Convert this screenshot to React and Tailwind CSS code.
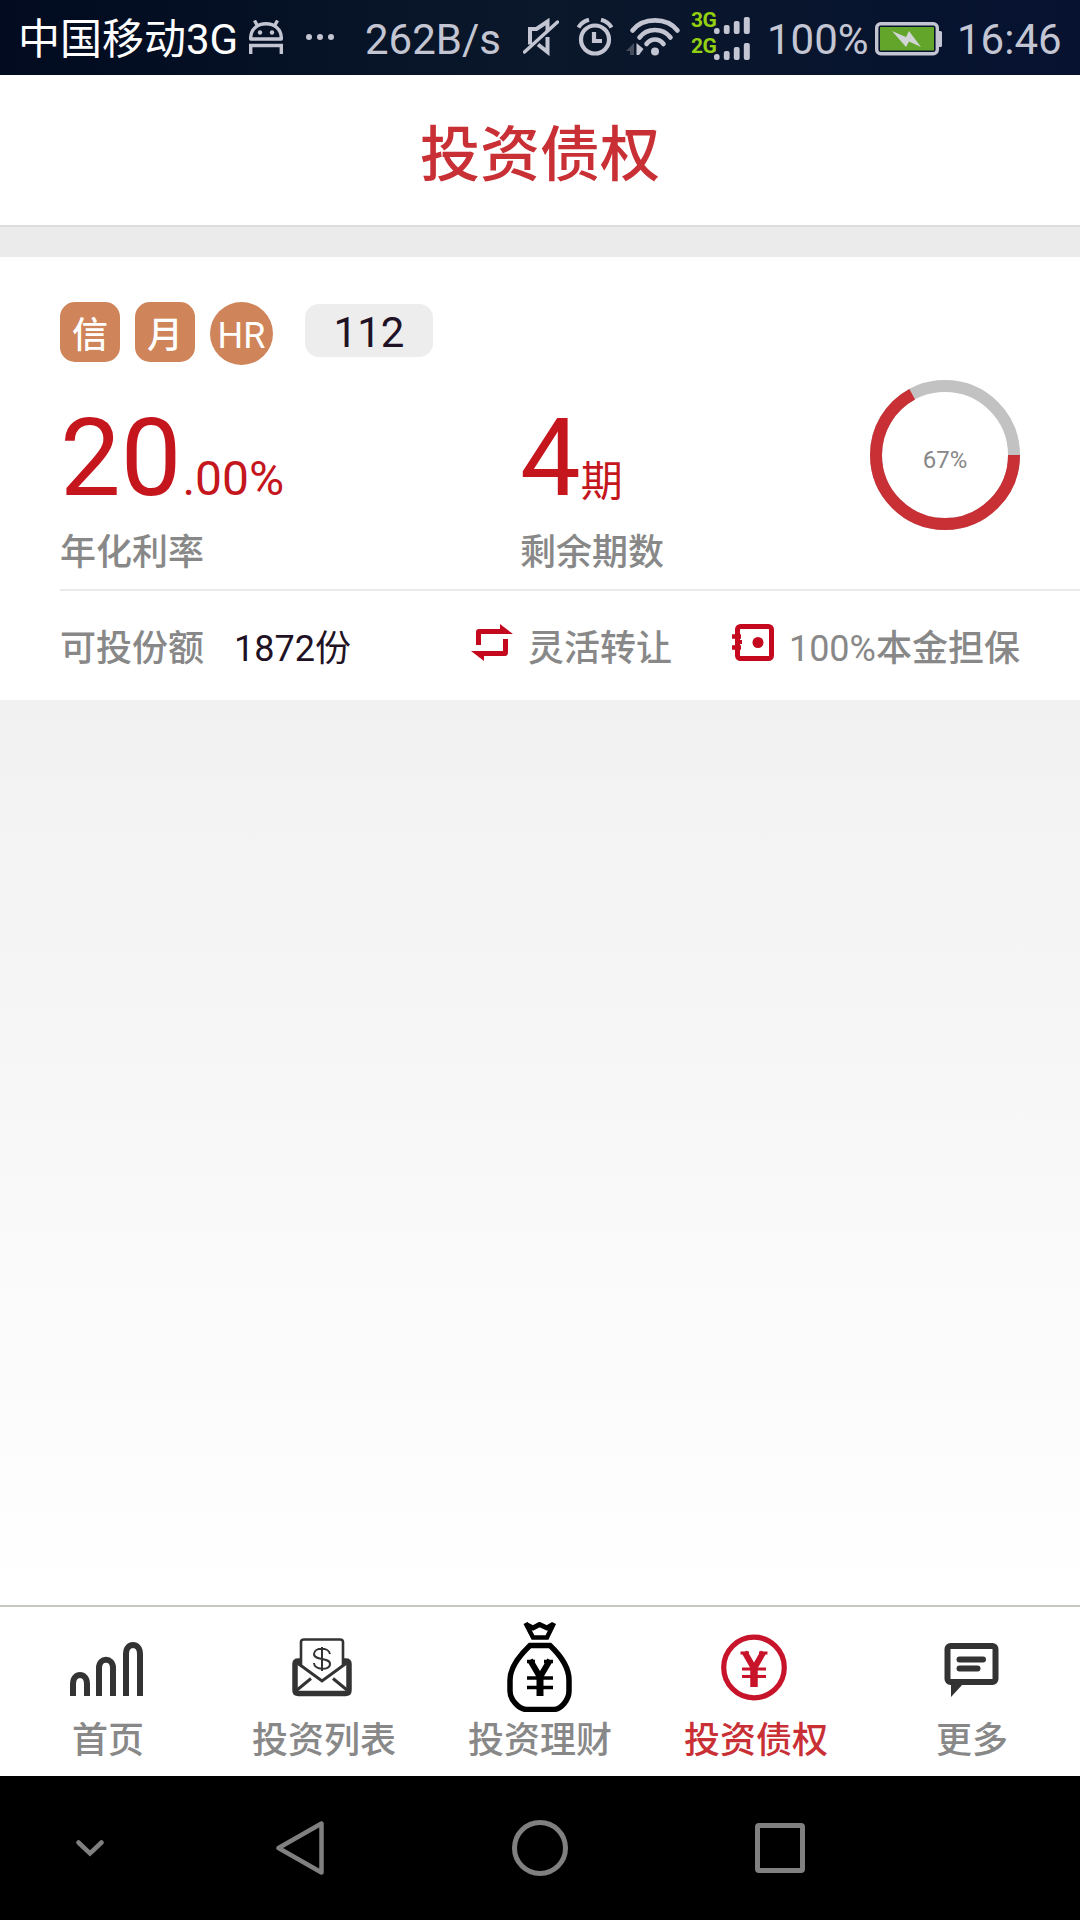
import React from "react";

function AndroidIcon() {
  return (
    <svg className="w-[34px] h-[34px]" viewBox="0 0 34 34" fill="none" stroke="#c3c6d2" strokeWidth="3.400">
      <path d="M1.700 19V17.500C2 9 8.500 3.800 17 3.800S32 9 32.300 17.500V19z" strokeLinejoin="round" />
      <path d="M8 5 5.500.5M26 5 28.500.5M1.700 34V25.500h30.600V34" strokeWidth="3.400" />
      <circle cx="11" cy="12.500" r="2.200" fill="#c3c6d2" stroke="none" />
      <circle cx="23" cy="12.500" r="2.200" fill="#c3c6d2" stroke="none" />
    </svg>
  );
}

function MuteIcon() {
  return (
    <svg className="w-[36px] h-[38px]" viewBox="0 0 36 38" fill="none" stroke="#c3c6d2" strokeWidth="4">
      <path d="M7 26.500V11H13.500L24.500 3.500V13M24.500 19V34L15 26.500" />
      <path d="M1.500 34 34.500 4" strokeLinecap="round" strokeWidth="3.400" />
    </svg>
  );
}

function AlarmIcon() {
  return (
    <svg className="w-[36px] h-[38px]" viewBox="0 0 36 38" fill="none" stroke="#c3c6d2" strokeWidth="4.200">
      <circle cx="18" cy="21.500" r="14" />
      <path d="M17 14V23H25" />
      <path d="M1.500 9.500Q5 3.500 12 1.800M34.500 9.500Q31 3.500 24 1.800" />
    </svg>
  );
}

function WifiIcon() {
  return (
    <svg className="w-[55px] h-[38px]" viewBox="0 0 55 38" fill="none" stroke="#c3c6d2" strokeWidth="4.600" strokeLinecap="round">
      <path d="M6.500 12.500C17-1 41-1 51.500 12.500M13.500 19.500C21 9.500 37 9.500 44.500 19.500M20.500 26C25 20 33 20 37.500 26" />
      <circle cx="29" cy="33.500" r="4" fill="#c3c6d2" stroke="none" />
      <path d="M0 33 8 25V37H4V33z" fill="#464d5e" stroke="none" />
      <path d="M10.500 25V37L13 37 17.500 31z" fill="#c3c6d2" stroke="none" />
    </svg>
  );
}

function SignalRow({ label }) {
  return (
    <div className="flex h-[26px]">
      <span className="-mt-px w-[23px] text-[21px] leading-[22px] font-bold text-[#93d011] tracking-[-0.5px]">{label}</span>
      <svg className="w-[36px] h-[26px]" viewBox="0 0 36 26" fill="#c3c6d2">
        <rect x="0" y="18" width="5.600" height="6" rx="2.500" />
        <rect x="9.800" y="15" width="5.800" height="9" rx="2" />
        <rect x="19.800" y="11" width="5.800" height="13" rx="2" />
        <rect x="29.800" y="7" width="6" height="17" rx="2" />
      </svg>
    </div>
  );
}

function BatteryIcon() {
  return (
    <svg className="w-[67px] h-[34px]" viewBox="0 0 67 34">
      <rect x="1.700" y="1.700" width="60.600" height="30" rx="4" fill="none" stroke="#c3c6d2" strokeWidth="3.400" />
      <path d="M63 9h2.500a1.500 1.500 0 0 1 1.500 1.500v13a1.500 1.500 0 0 1-1.500 1.500H63z" fill="#c3c6d2" />
      <rect x="5" y="5" width="54" height="23.500" fill="#62a52a" />
      <path d="M17 9 31 15 34 9 46 25 34 19.500 31 25z" fill="#d0d4d4" />
    </svg>
  );
}

function StatusBar() {
  return (
    <header className="flex h-[75px] items-start bg-linear-to-r from-[#020b20] via-[#0b172a] to-[#061230] text-[42px] leading-[48px] text-[#c3c6d2] whitespace-nowrap">
      <span className="ml-[18px] w-[231px] pt-4 text-white">中国移动3G</span>
      <div className="mt-5"><AndroidIcon /></div>
      <div className="ml-[23px] mt-[34px] flex gap-[5px]">
        <i className="size-[6px] rounded-full bg-[#c3c6d2]" />
        <i className="size-[6px] rounded-full bg-[#c3c6d2]" />
        <i className="size-[6px] rounded-full bg-[#c3c6d2]" />
      </div>
      <span className="ml-[31px] w-[158px] pt-4">262B/s</span>
      <div className="mt-[18px]"><MuteIcon /></div>
      <div className="ml-[18px] mt-[18px]"><AlarmIcon /></div>
      <div className="ml-[13px] mt-[18px]"><WifiIcon /></div>
      <div className="ml-[10px] mt-[10px]">
        <SignalRow label="3G" />
        <SignalRow label="2G" />
      </div>
      <span className="ml-[17px] w-[108px] pt-4">100%</span>
      <div className="mt-[22px]"><BatteryIcon /></div>
      <span className="ml-[15px] pt-4">16:46</span>
    </header>
  );
}

function Ring({ percent }) {
  const r = 69;
  const len = 2 * Math.PI * r;
  return (
    <div className="grid size-[150px] place-items-center">
      <svg className="col-start-1 row-start-1 size-[150px]" viewBox="0 0 150 150" fill="none" strokeWidth="12">
        <circle cx="75" cy="75" r={r} stroke="#c2c2c2" />
        <circle cx="75" cy="75" r={r} stroke="#c93036" strokeDasharray={`${(len * percent) / 100} ${len}`} />
      </svg>
      <span className="col-start-1 row-start-1 pt-[10px] text-[24px] leading-7 text-[#888]">{percent}%</span>
    </div>
  );
}

function TransferIcon() {
  return (
    <svg className="w-[42px] h-[37px]" viewBox="0 0 42 37" fill="#c4081e">
      <path d="M5 21V8q0-3 3-3H29V0L42 10H10V21z" />
      <path d="M37 15V28q0 4-3 4H13V37L0 27H32V15z" />
    </svg>
  );
}

function SafeIcon() {
  return (
    <svg className="w-[42px] h-[37px]" viewBox="0 0 42 37" fill="none" stroke="#c4081e">
      <rect x="5.500" y="2.500" width="34" height="32" rx="3" strokeWidth="5" />
      <path d="M0 12.500H9M0 23.500H9" strokeWidth="4.500" />
      <path d="M3 18H10" strokeWidth="4" />
      <circle cx="26" cy="18.500" r="5.500" fill="#c4081e" stroke="none" />
    </svg>
  );
}

function DebtCard() {
  return (
    <section className="h-[443px] bg-white pl-[60px]">
      <div className="flex items-start pt-[45px] text-[36px] leading-[60px] text-white">
        <span className="size-[60px] rounded-[15px] bg-[#cf8459] pt-1 text-center font-medium">信</span>
        <span className="ml-[15px] size-[60px] rounded-[15px] bg-[#cf8459] pt-1 text-center font-medium">月</span>
        <span className="ml-[15px] size-[63px] rounded-full bg-[#cf8459] pt-1 text-center">HR</span>
        <span className="ml-[32px] mt-[2px] h-[53px] w-[128px] rounded-[14px] bg-[#ededed] text-center text-[42px] leading-[58px] text-[#1f1225]">112</span>
      </div>

      <div className="flex h-[224px] pr-[60px]">
        <div className="w-[460px] pt-[33px]">
          <div className="h-[120px] leading-[120px] text-[#c5161d]">
            <span className="text-[108px]">20</span>
            <span className="ml-px text-[48px]">.00%</span>
          </div>
          <div className="mt-[14px] text-[36px] leading-[42px] font-medium text-[#888]">年化利率</div>
        </div>
        <div className="flex-1 pt-[33px]">
          <div className="flex h-[120px] leading-[120px] text-[#c5161d]">
            <span className="text-[108px]">4</span>
            <span className="pt-[24px] text-[42px]">期</span>
          </div>
          <div className="mt-[14px] text-[36px] leading-[42px] font-medium text-[#888]">剩余期数</div>
        </div>
        <div className="pt-[15px]">
          <Ring percent={67} />
        </div>
      </div>

      <div className="flex h-[111px] items-start border-t-2 border-[#ebebeb] pt-[37px] pr-[60px] text-[36px] leading-[42px] text-[#888] whitespace-nowrap">
        <span className="font-medium">可投份额</span>
        <span className="ml-[30px] w-[238px] text-[#1f1225]">1872份</span>
        <div className="-mt-[4px]"><TransferIcon /></div>
        <span className="ml-[15px] font-medium">灵活转让</span>
        <div className="-mt-[4px] ml-[60px]"><SafeIcon /></div>
        <span className="ml-[15px]">100%<span className="font-medium">本金担保</span></span>
      </div>
    </section>
  );
}

function HomeIcon() {
  return (
    <svg className="mr-1 w-[73px] h-[90px]" viewBox="0 0 73 90" fill="none" stroke="#333" strokeWidth="6">
      <path d="M3 74V62C3 50 17 50 17 62V74M29 74V46C29 35 43 35 43 46V74M56 74V32C56 20 70 20 70 32V74" />
    </svg>
  );
}

function ListIcon() {
  return (
    <svg className="mr-1 w-[60px] h-[90px]" viewBox="0 0 60 90" fill="none" stroke="#333">
      <path d="M9 39H6.500Q3 39 3 42V68Q3 71.500 6.500 71.500H53.500Q57 71.500 57 68V42Q57 39 53.500 39H51" strokeWidth="5.500" />
      <path d="M9 43V20Q9 17.500 12 17.500H48Q51 17.500 51 20V43" strokeWidth="2.600" />
      <path d="M4 40 30 59 56 40M5 68 19 56.500M55 68 41 56.500" strokeWidth="3" />
      <path d="M38 32C37 25 22 25 22 32C22 39 38 35 38 42C38 49 22 48 22 41M30 25V49" strokeWidth="2" />
    </svg>
  );
}

function BagIcon() {
  return (
    <svg className="w-[66px] h-[90px]" viewBox="0 0 66 90" fill="none" stroke="#000" strokeWidth="5.500">
      <path d="M23 23.500H43C52 32 62 45 62 58V69C62 78 54 87 47 87.500H19C12 87 3 78 3 69V58C3 45 14 32 23 23.500z" />
      <path d="M18.500 1 26 15.500H40L47 1" strokeWidth="4.500" />
      <path d="M19 2.500 26 6 32.500 2.500 40 6 46 2.500" strokeWidth="5" />
      <path d="M23 38 33 55 43 38" strokeWidth="6" />
      <path d="M33 52V74" strokeWidth="7" />
      <path d="M20 56H46M20 65.500H46M20 39.500H28M37 39.500H46" strokeWidth="3.500" />
    </svg>
  );
}

function YenIcon() {
  return (
    <svg className="mr-1 w-[66px] h-[90px]" viewBox="0 0 66 90" fill="none" stroke="#c8142a" strokeWidth="5.200">
      <circle cx="33" cy="45.500" r="30.300" />
      <path d="M23.500 30 33 46.500 42.500 30" strokeWidth="6" />
      <path d="M33 45V65" strokeWidth="7.500" />
      <path d="M21 47H45M21 54.500H45M19.500 31H28M38 31H46.500" strokeWidth="3" />
    </svg>
  );
}

function MoreIcon() {
  return (
    <svg className="mr-[2px] w-[55px] h-[90px]" viewBox="0 0 55 90" fill="none" stroke="#333" strokeLinecap="round">
      <rect x="3.500" y="24" width="48" height="36" rx="3" strokeWidth="6" />
      <path d="M15.500 37.500H39M15.500 46.500H33.500" strokeWidth="6" />
      <path d="M7 60V75L19 62z" fill="#333" stroke="none" />
    </svg>
  );
}

const tabs = [
  { label: "首页", Icon: HomeIcon },
  { label: "投资列表", Icon: ListIcon },
  { label: "投资理财", Icon: BagIcon },
  { label: "投资债权", Icon: YenIcon, active: true },
  { label: "更多", Icon: MoreIcon },
];

function TabBar() {
  return (
    <nav className="grid h-[171px] grid-cols-5 border-t-2 border-[#c6c7c0] bg-white">
      {tabs.map(({ label, Icon, active }) => (
        <div key={label} className="flex flex-col items-center pt-[15px]">
          <Icon />
          <span className={active ? "mt-2 text-[36px] leading-[42px] font-medium text-[#c93036]" : "mt-2 text-[36px] leading-[42px] font-medium text-[#888]"}>
            {label}
          </span>
        </div>
      ))}
    </nav>
  );
}

function SystemNav() {
  return (
    <footer className="grid h-[144px] grid-cols-[180px_240px_240px_240px_180px] place-items-center bg-black">
      <svg className="w-[28px] h-[18px]" viewBox="0 0 28 18" fill="none" stroke="#808080" strokeWidth="4.500">
        <path d="M2.500 3.500 14 14.500 25.500 3.500" strokeLinecap="round" />
      </svg>
      <svg className="w-[48px] h-[56px]" viewBox="0 0 48 56" fill="none" stroke="#808080" strokeWidth="4.500">
        <path d="M45.500 3.500V52.500L2.500 28z" strokeLinejoin="round" />
      </svg>
      <i className="size-[56px] rounded-full border-5 border-[#808080]" />
      <i className="size-[50px] rounded-[4px] border-5 border-[#808080]" />
    </footer>
  );
}

export default function App() {
  return (
    <div className="flex h-[1920px] w-[1080px] flex-col overflow-hidden bg-white font-[Roboto,'Noto_Sans_CJK_SC',sans-serif]">
      <StatusBar />
      <h1 className="h-[150px] pt-[46px] text-center text-[60px] leading-[70px] font-medium text-[#c93036]">投资债权</h1>
      <div className="h-[32px] border-t-2 border-[#dcdcdc] bg-[#ebebeb]" />
      <DebtCard />
      <main className="flex-1 bg-linear-to-b from-[#f1f1f1] to-white" />
      <TabBar />
      <SystemNav />
    </div>
  );
}
